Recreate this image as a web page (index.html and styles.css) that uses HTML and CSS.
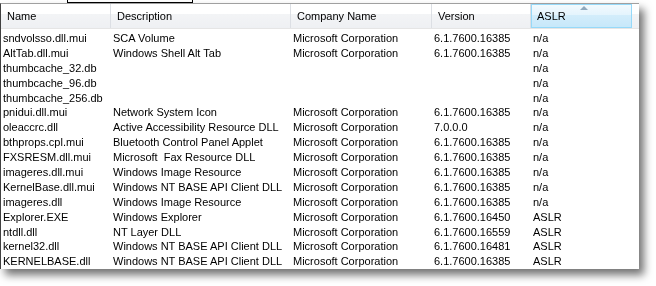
FILE: index.html
```html
<!DOCTYPE html>
<html lang="en">
<head>
  <meta charset="UTF-8" />
  <title>Modules</title>
  <link rel="stylesheet" href="styles.css">
</head>
<body>
  <div class="tab-stub"></div>
  <div class="list-view">
    <div class="list-header">
      <div class="col col-name">Name</div>
      <div class="col col-desc">Description</div>
      <div class="col col-company">Company Name</div>
      <div class="col col-version">Version</div>
      <div class="col col-aslr sorted">ASLR<span class="sort-arrow"></span></div>
      <div class="col col-rest"></div>
    </div>
    <div class="list-body" id="list-body"></div>
  </div>

  <script>
    const rows = [
      ["sndvolsso.dll.mui", "SCA Volume", "Microsoft Corporation", "6.1.7600.16385", "n/a"],
      ["AltTab.dll.mui", "Windows Shell Alt Tab", "Microsoft Corporation", "6.1.7600.16385", "n/a"],
      ["thumbcache_32.db", "", "", "", "n/a"],
      ["thumbcache_96.db", "", "", "", "n/a"],
      ["thumbcache_256.db", "", "", "", "n/a"],
      ["pnidui.dll.mui", "Network System Icon", "Microsoft Corporation", "6.1.7600.16385", "n/a"],
      ["oleaccrc.dll", "Active Accessibility Resource DLL", "Microsoft Corporation", "7.0.0.0", "n/a"],
      ["bthprops.cpl.mui", "Bluetooth Control Panel Applet", "Microsoft Corporation", "6.1.7600.16385", "n/a"],
      ["FXSRESM.dll.mui", "Microsoft  Fax Resource DLL", "Microsoft Corporation", "6.1.7600.16385", "n/a"],
      ["imageres.dll.mui", "Windows Image Resource", "Microsoft Corporation", "6.1.7600.16385", "n/a"],
      ["KernelBase.dll.mui", "Windows NT BASE API Client DLL", "Microsoft Corporation", "6.1.7600.16385", "n/a"],
      ["imageres.dll", "Windows Image Resource", "Microsoft Corporation", "6.1.7600.16385", "n/a"],
      ["Explorer.EXE", "Windows Explorer", "Microsoft Corporation", "6.1.7600.16450", "ASLR"],
      ["ntdll.dll", "NT Layer DLL", "Microsoft Corporation", "6.1.7600.16559", "ASLR"],
      ["kernel32.dll", "Windows NT BASE API Client DLL", "Microsoft Corporation", "6.1.7600.16481", "ASLR"],
      ["KERNELBASE.dll", "Windows NT BASE API Client DLL", "Microsoft Corporation", "6.1.7600.16385", "ASLR"]
    ];
    const classes = ["col-name", "col-desc", "col-company", "col-version", "col-aslr"];

    const body = document.getElementById("list-body");
    rows.forEach(r => {
      const row = document.createElement("div");
      row.className = "row";
      r.forEach((text, i) => {
        const cell = document.createElement("div");
        cell.className = "cell " + classes[i];
        cell.textContent = text;
        row.appendChild(cell);
      });
      body.appendChild(row);
    });
  </script>
</body>
</html>
```

FILE: styles.css
```css
body {
  margin: 0;
  padding-bottom: 20px;
  background: #fff;
  font-family: "Liberation Sans", Arial, sans-serif;
  font-size: 11px;
  color: #000;
}

.tab-stub {
  margin-left: 67px;
  width: 124px;
  height: 2px;
  border: 1px solid #000;
  border-top: none;
  background: #fff;
}

.list-view {
  width: 639px;
  height: 266px;
  border-top: 1px solid #a0a0a0;
  border-left: 1px solid #404040;
  box-sizing: border-box;
  background: #fff;
  filter: drop-shadow(5px 6px 4px rgba(0, 0, 0, 0.55));
}

.list-header {
  display: flex;
  height: 25px;
  background: linear-gradient(#ffffff 0%, #ffffff 40%, #f3f4f6 41%, #eef0f3 100%);
  border-bottom: 1px solid #e5e5e5;
  box-sizing: border-box;
}

.col {
  box-sizing: border-box;
  padding: 6px 0 0 6px;
  border-right: 1px solid #dcdfe4;
  position: relative;
}

.col-name { width: 110px; flex: none; }
.col-desc { width: 180px; flex: none; }
.col-company { width: 141px; flex: none; }
.col-version { width: 99px; flex: none; }
.col-aslr { width: 101px; flex: none; }
.col-rest { flex: 1; border-right: none; }

.col.sorted {
  background: linear-gradient(#f2fafe 0%, #e4f4fd 45%, #d3edfb 46%, #c7e8fa 100%);
  border: 1px solid #96d9f9;
  padding: 5px 0 0 5px;
}

.sort-arrow {
  position: absolute;
  left: 48px;
  top: 1px;
  width: 0;
  height: 0;
  border-left: 4px solid transparent;
  border-right: 4px solid transparent;
  border-bottom: 4px solid #8fa9be;
}

.list-body {
  padding-top: 2px;
  height: 239px;
  overflow: hidden;
}

.row {
  display: flex;
  height: 14.9px;
  line-height: 15px;
  white-space: pre;
}

.cell {
  box-sizing: border-box;
  padding-left: 2px;
  overflow: hidden;
}
```
